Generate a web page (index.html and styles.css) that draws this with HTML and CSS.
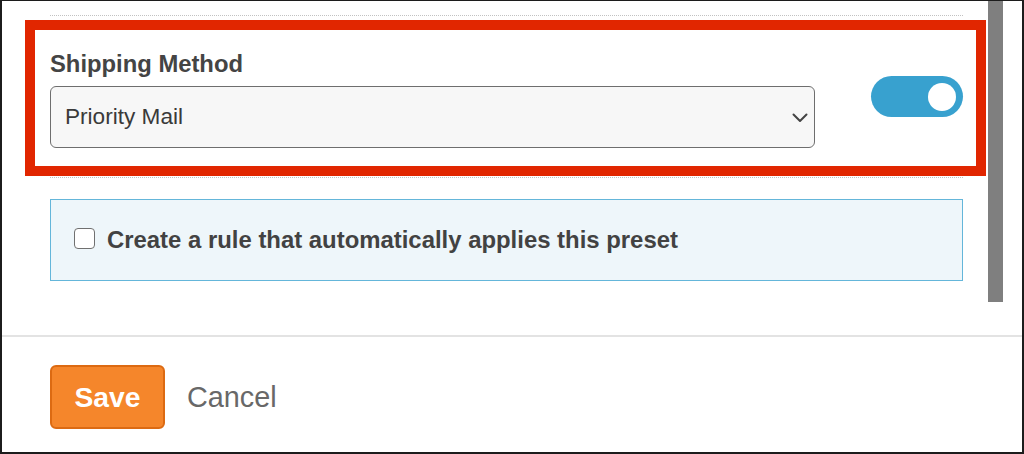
FILE: index.html
```html
<!DOCTYPE html>
<html lang="en">
<head>
<meta charset="utf-8">
<title>Shipping Preset</title>
<link rel="stylesheet" href="styles.css">
</head>
<body>
<div class="frame">
  <div class="main">
    <div class="content">
      <div class="rule-dotted"></div>
      <div class="highlight">
        <div class="field-row">
          <div class="field">
            <div class="field-label">Shipping Method</div>
            <div class="select">
              <span class="select-value">Priority Mail</span>
              <svg class="chevron" width="16" height="10" viewBox="0 0 16 10" aria-hidden="true">
                <path d="M1.5 1.5 L8 8 L14.5 1.5" fill="none" stroke="#444" stroke-width="2" stroke-linecap="round" stroke-linejoin="round"/>
              </svg>
            </div>
          </div>
          <div class="toggle"><span class="knob"></span></div>
        </div>
      </div>
      <div class="rule-dotted rule-dotted--after"></div>
      <div class="rule-box">
        <span class="checkbox"></span>
        <span class="rule-label">Create a rule that automatically applies this preset</span>
      </div>
    </div>
    <div class="scroll-track"><div class="scroll-thumb"></div></div>
  </div>
  <div class="footer">
    <button class="btn-save" type="button">Save</button>
    <span class="btn-cancel">Cancel</span>
  </div>
</div>
</body>
</html>
```

FILE: styles.css
```css
* { box-sizing: border-box; }

html, body {
  margin: 0;
  padding: 0;
  background: #ffffff;
}

body {
  font-family: "Liberation Sans", Arial, sans-serif;
  width: 1024px;
  height: 454px;
  overflow: hidden;
}

.frame {
  width: 1024px;
  height: 454px;
  border-style: solid;
  border-color: #1c1c1c;
  border-width: 1px 2px 2px 2px;
  display: flex;
  flex-direction: column;
  background: #fff;
}

.main {
  display: flex;
  height: 334px;
  flex: none;
}

.content {
  width: 961px;
  padding: 14px 0 0 48px;
  flex: none;
}

.rule-dotted {
  border-top: 1px dotted #c2c2c2;
  height: 0;
}

.rule-dotted--after {
  margin-top: 1px;
}

.highlight {
  margin: 4px -23px 0 -25px;
  border: 10px solid #e12600;
  padding: 20px 13px 18px 15px;
}

.field-row {
  display: flex;
  justify-content: space-between;
  align-items: flex-start;
}

.field {
  width: 765px;
}

.field-label {
  font-weight: 700;
  font-size: 23.8px;
  line-height: 28px;
  color: #444444;
}

.select {
  margin-top: 8px;
  height: 62px;
  border: 1.5px solid #6e6e6e;
  border-radius: 6px;
  background: #f7f7f7;
  display: flex;
  align-items: center;
  justify-content: space-between;
  padding: 0 6px 0 14px;
}

.select-value {
  font-size: 22.6px;
  color: #3a3a3a;
}

.chevron {
  display: block;
  margin-top: 2px;
}

.toggle {
  margin-top: 26px;
  width: 92px;
  height: 41px;
  border-radius: 21px;
  background: #38a1cf;
  display: flex;
  align-items: center;
  justify-content: flex-end;
  padding-right: 7px;
}

.knob {
  width: 28px;
  height: 28px;
  border-radius: 50%;
  background: #ffffff;
  margin-top: 1px;
}

.rule-box {
  margin-top: 21px;
  height: 82px;
  border: 1.5px solid #64b6da;
  background: #eef6fa;
  display: flex;
  align-items: center;
  padding-left: 23px;
  gap: 12px;
}

.checkbox {
  width: 21px;
  height: 21px;
  border: 1.5px solid #707070;
  border-radius: 4px;
  background: #ffffff;
  margin-top: -4px;
  flex: none;
}

.rule-label {
  font-weight: 700;
  font-size: 23.9px;
  color: #424242;
}

.scroll-track {
  margin-left: 25px;
  width: 15px;
  flex: none;
}

.scroll-thumb {
  width: 15px;
  height: 301px;
  background: #7f7f7f;
}

.footer {
  border-top: 2px solid #e3e3e3;
  flex: 1;
  display: flex;
  align-items: flex-start;
  padding: 28px 0 0 48px;
  gap: 22px;
}

.btn-save {
  width: 115px;
  height: 64px;
  border: 2px solid #dc6a12;
  border-radius: 6px;
  background: #f5862b;
  color: #ffffff;
  font-family: "Liberation Sans", Arial, sans-serif;
  font-weight: 700;
  font-size: 28.3px;
  padding: 0;
  cursor: pointer;
}

.btn-cancel {
  font-size: 28.8px;
  color: #686868;
  line-height: 64px;
}
```
